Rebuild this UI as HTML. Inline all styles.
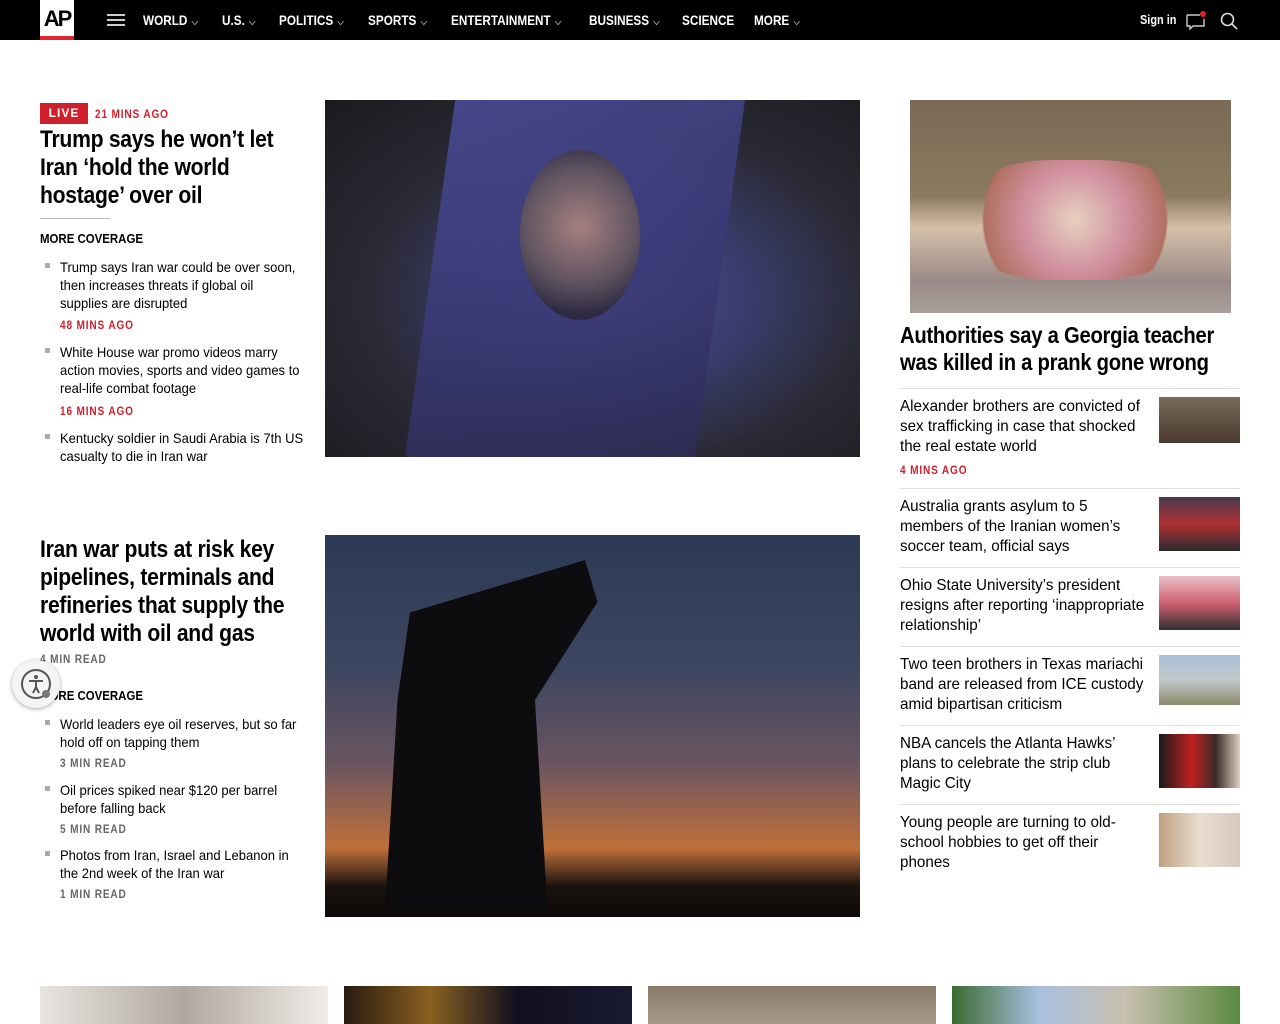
<!DOCTYPE html>
<html><head><meta charset="utf-8">
<style>
*{margin:0;padding:0;box-sizing:border-box}
body{width:1280px;height:1024px;overflow:hidden;background:#fff;font-family:"Liberation Sans",sans-serif;color:#000;position:relative}
.nav{position:absolute;left:0;top:0;width:1280px;height:40px;background:#000}
.logo{position:absolute;left:40px;top:0;width:34px;height:40px;background:#fff;border-bottom:4px solid #e2242c;font-weight:bold;font-size:22px;letter-spacing:-2px;text-align:center;line-height:38px}
.menu{position:absolute;left:107px;top:14px;width:18px}
.menu i{display:block;height:2px;background:#ccc;margin-bottom:3px}
.a,.nl{position:absolute;transform:scaleX(.88);transform-origin:0 0;white-space:nowrap}
.nl{top:12px;color:#fff;font-weight:bold;font-size:14px;transform:scaleX(.84)}
.nl small{font-size:10px;color:#bbb;margin-left:5px}
.h{font-weight:bold;font-size:24px;line-height:28px;letter-spacing:-.3px}
.red{color:#d0202c;font-weight:bold;font-size:12px;letter-spacing:1px;transform:scaleX(.84)}
.gray{color:#666;font-weight:bold;font-size:12px;letter-spacing:1px;transform:scaleX(.84)}
.li{font-size:14px;line-height:18px;transform:scaleX(.93)}
.bul{position:absolute;width:5px;height:5px;background:#aaa}
.side{font-size:16px;line-height:20px;transform:scaleX(.95)}
.hr{position:absolute;left:900px;width:340px;height:1px;background:#ddd}
.th,.img{position:absolute}
.th{left:1159px;width:81px;height:54px}
</style></head><body>
<div class="nav">
<div class="logo">AP</div>
<div class="menu"><i></i><i></i><i></i></div>
<div class="nl" style="left:143px">WORLD<small>⌵</small></div>
<div class="nl" style="left:222px">U.S.<small>⌵</small></div>
<div class="nl" style="left:279px">POLITICS<small>⌵</small></div>
<div class="nl" style="left:368px">SPORTS<small>⌵</small></div>
<div class="nl" style="left:451px">ENTERTAINMENT<small>⌵</small></div>
<div class="nl" style="left:589px">BUSINESS<small>⌵</small></div>
<div class="nl" style="left:682px">SCIENCE</div>
<div class="nl" style="left:754px">MORE<small>⌵</small></div>
<div class="nl" style="left:1140px;font-size:13px">Sign in</div>
<svg style="position:absolute;left:1185px;top:11px" width="22" height="19" viewBox="0 0 22 19"><path d="M2 4h13M2 4v11h3v3l3-3h11v-7" fill="none" stroke="#ccc" stroke-width="1.4"/><circle cx="18" cy="3" r="3" fill="#e2242c"/></svg>
<svg style="position:absolute;left:1220px;top:12px" width="18" height="18" viewBox="0 0 18 18"><circle cx="7.5" cy="7.5" r="6" fill="none" stroke="#ddd" stroke-width="1.6"/><path d="M12 12l5 5" stroke="#ddd" stroke-width="1.6"/></svg>
</div>

<div style="position:absolute;left:40px;top:103px;width:48px;height:21px;background:#d0202c;color:#fff;font-weight:bold;font-size:12px;letter-spacing:1px;text-align:center;line-height:21px">LIVE</div>
<div class="a red" style="left:95px;top:107px">21 MINS AGO</div>
<div class="a h" style="left:40px;top:126px">Trump says he won’t let<br>Iran ‘hold the world<br>hostage’ over oil</div>
<div style="position:absolute;left:40px;top:218px;width:70px;height:1px;background:#bbb"></div>
<div class="a" style="left:40px;top:231px;font-weight:bold;font-size:13px">MORE COVERAGE</div>
<div class="bul" style="left:45px;top:263px"></div>
<div class="a li" style="left:60px;top:258px">Trump says Iran war could be over soon,<br>then increases threats if global oil<br>supplies are disrupted</div>
<div class="a red" style="left:60px;top:318px">48 MINS AGO</div>
<div class="bul" style="left:45px;top:348px"></div>
<div class="a li" style="left:60px;top:343px">White House war promo videos marry<br>action movies, sports and video games to<br>real-life combat footage</div>
<div class="a red" style="left:60px;top:404px">16 MINS AGO</div>
<div class="bul" style="left:45px;top:434px"></div>
<div class="a li" style="left:60px;top:429px">Kentucky soldier in Saudi Arabia is 7th US<br>casualty to die in Iran war</div>

<div class="img" style="left:325px;top:100px;width:535px;height:357px;background:radial-gradient(ellipse at 55% 55%,#4a4f8a 0%,#3a3d6e 30%,#2a2a35 60%,#1a1a1e 100%)"></div>
<div class="img" style="left:430px;top:100px;width:290px;height:357px;background:linear-gradient(160deg,#4c4fa0,#3b3a7a 50%,#2d2b55);transform:skewX(-8deg);opacity:.8"></div>
<div class="img" style="left:520px;top:150px;width:120px;height:170px;border-radius:50%;background:radial-gradient(circle at 50% 45%,#c09080,#6a5a5a 50%,#2a2535 80%);opacity:.8"></div>

<div class="a h" style="left:40px;top:536px">Iran war puts at risk key<br>pipelines, terminals and<br>refineries that supply the<br>world with oil and gas</div>
<div class="a gray" style="left:40px;top:652px">4 MIN READ</div>
<div class="a" style="left:40px;top:688px;font-weight:bold;font-size:13px">MORE COVERAGE</div>
<div class="bul" style="left:45px;top:720px"></div>
<div class="a li" style="left:60px;top:715px">World leaders eye oil reserves, but so far<br>hold off on tapping them</div>
<div class="a gray" style="left:60px;top:756px">3 MIN READ</div>
<div class="bul" style="left:45px;top:786px"></div>
<div class="a li" style="left:60px;top:781px">Oil prices spiked near $120 per barrel<br>before falling back</div>
<div class="a gray" style="left:60px;top:822px">5 MIN READ</div>
<div class="bul" style="left:45px;top:851px"></div>
<div class="a li" style="left:60px;top:846px">Photos from Iran, Israel and Lebanon in<br>the 2nd week of the Iran war</div>
<div class="a gray" style="left:60px;top:887px">1 MIN READ</div>
<div style="position:absolute;left:12px;top:660px;width:48px;height:48px;border-radius:50%;background:#f4f4f4;box-shadow:0 1px 4px rgba(0,0,0,.35)"><svg style="position:absolute;left:8px;top:8px" width="32" height="32" viewBox="0 0 32 32"><circle cx="16" cy="16" r="14" fill="none" stroke="#555" stroke-width="2"/><circle cx="16" cy="9" r="2" fill="#555"/><path d="M9 13h14M16 13v6l-3 6M16 19l3 6" fill="none" stroke="#555" stroke-width="2"/><circle cx="26" cy="26" r="4" fill="#777"/></svg></div>

<div class="img" style="left:325px;top:535px;width:535px;height:382px;background:linear-gradient(180deg,#2c3a55 0%,#3d4660 35%,#6a5560 60%,#c0703a 82%,#1a120e 92%,#0e0a08 100%)"></div>
<div class="img" style="left:385px;top:560px;width:250px;height:350px;background:#0d0d10;clip-path:polygon(10% 15%,80% 0,85% 12%,60% 40%,65% 100%,0 100%,5% 40%)"></div>

<div class="img" style="left:910px;top:100px;width:321px;height:213px;background:linear-gradient(180deg,#7a6a55 0%,#8a7a60 45%,#d6c0a8 60%,#9a8a88 85%,#a8a098 100%)"></div>
<div class="img" style="left:960px;top:160px;width:230px;height:120px;border-radius:40%;background:radial-gradient(circle,#e8d0c0,#d090a0 40%,#b07060 70%,transparent 72%)"></div>
<div class="a h" style="left:900px;top:322px;font-size:23px;line-height:27px">Authorities say a Georgia teacher<br>was killed in a prank gone wrong</div>

<div class="hr" style="top:388px"></div>
<div class="a side" style="left:900px;top:397px">Alexander brothers are convicted of<br>sex trafficking in case that shocked<br>the real estate world</div>
<div class="a red" style="left:900px;top:463px">4 MINS AGO</div>
<div class="th" style="top:397px;height:46px;background:linear-gradient(#7a6a58,#4a3a30)"></div>
<div class="hr" style="top:488px"></div>
<div class="a side" style="left:900px;top:497px">Australia grants asylum to 5<br>members of the Iranian women’s<br>soccer team, official says</div>
<div class="th" style="top:497px;background:linear-gradient(#4a3a50,#b03030 50%,#2a2a30)"></div>
<div class="hr" style="top:567px"></div>
<div class="a side" style="left:900px;top:576px">Ohio State University’s president<br>resigns after reporting ‘inappropriate<br>relationship’</div>
<div class="th" style="top:576px;background:linear-gradient(#e8c0c8,#d06070 50%,#303030)"></div>
<div class="hr" style="top:646px"></div>
<div class="a side" style="left:900px;top:655px">Two teen brothers in Texas mariachi<br>band are released from ICE custody<br>amid bipartisan criticism</div>
<div class="th" style="top:655px;height:50px;background:linear-gradient(#a8c0d8,#c0c8c8 50%,#8a8a6a)"></div>
<div class="hr" style="top:725px"></div>
<div class="a side" style="left:900px;top:734px">NBA cancels the Atlanta Hawks’<br>plans to celebrate the strip club<br>Magic City</div>
<div class="th" style="top:734px;background:linear-gradient(90deg,#1a1a1a,#c02020 40%,#3a2a2a 70%,#e0d0c0)"></div>
<div class="hr" style="top:804px"></div>
<div class="a side" style="left:900px;top:813px">Young people are turning to old-<br>school hobbies to get off their<br>phones</div>
<div class="th" style="top:813px;background:linear-gradient(90deg,#c0a080,#e8ddd0 50%,#d8c8c0)"></div>

<div class="img" style="left:40px;top:986px;width:288px;height:38px;background:linear-gradient(90deg,#e8e4e0,#b0a8a0 50%,#f0ece8)"></div>
<div class="img" style="left:344px;top:986px;width:288px;height:38px;background:linear-gradient(90deg,#2a1a10,#8a6020 30%,#101020 60%,#1a1a30)"></div>
<div class="img" style="left:648px;top:986px;width:288px;height:38px;background:linear-gradient(#8a7a68,#a89888)"></div>
<div class="img" style="left:952px;top:986px;width:288px;height:38px;background:linear-gradient(90deg,#3a6a30,#a8c0e0 30%,#c8c0b0 60%,#5a8a40)"></div>
</body></html>
